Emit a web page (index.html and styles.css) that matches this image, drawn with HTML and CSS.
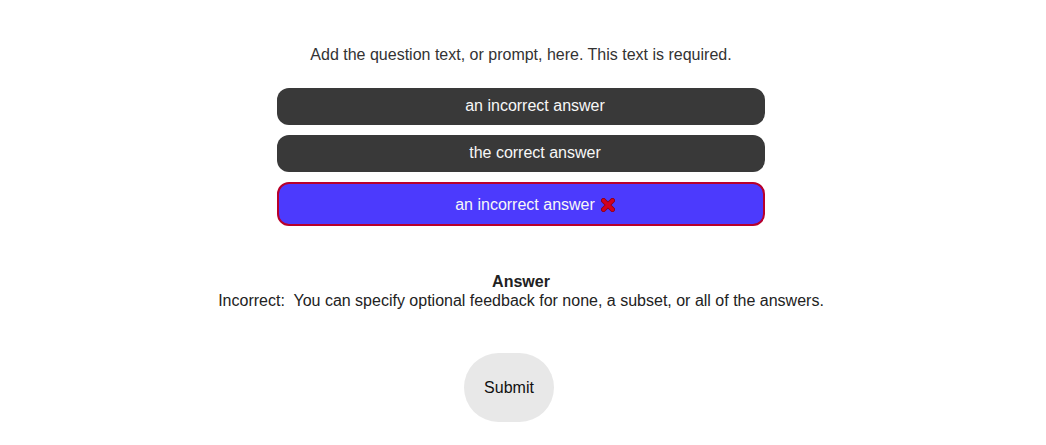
FILE: index.html
```html
<!DOCTYPE html>
<html>
<head>
<meta charset="utf-8">
<link rel="stylesheet" href="styles.css">
</head>
<body>
<div class="quiz">
  <p class="prompt">Add the question text, or prompt, here. This text is required.</p>
  <div class="answers">
    <div class="answer">an incorrect answer</div>
    <div class="answer">the correct answer</div>
    <div class="answer selected">an incorrect answer <svg class="mark" width="14" height="14" viewBox="0 0 14 14" aria-hidden="true"><path d="M2.5 2.5 L11.5 11.5 M11.5 2.5 L2.5 11.5" stroke="#8a0018" stroke-width="5" stroke-linecap="round"/><path d="M2.5 2.5 L11.5 11.5 M11.5 2.5 L2.5 11.5" stroke="#d3001f" stroke-width="3.4" stroke-linecap="round"/></svg></div>
  </div>
  <div class="feedback">
    <div class="feedback-title">Answer</div>
    <div class="feedback-text">Incorrect:&nbsp; You can specify optional feedback for none, a subset, or all of the answers.</div>
  </div>
  <button class="submit">Submit</button>
</div>
</body>
</html>
```
FILE: styles.css
```css
html, body {
  margin: 0;
  padding: 0;
  background: #fff;
}
body {
  font-family: "Liberation Sans", Arial, sans-serif;
  font-size: 16px;
  color: #333;
}
.quiz {
  display: flex;
  flex-direction: column;
  align-items: center;
  padding-top: 46px;
  padding-right: 4px;
}
.prompt {
  margin: 0;
  line-height: 18px;
  color: #333;
}
.answers {
  margin-top: 24px;
  width: 488px;
  display: flex;
  flex-direction: column;
  gap: 10px;
}
.answer {
  box-sizing: border-box;
  height: 37px;
  border-radius: 12px;
  background: #393939;
  color: #f7f7f7;
  display: flex;
  align-items: center;
  justify-content: center;
  line-height: 18px;
  padding-left: 28px;
  padding-bottom: 2px;
}
.answer.selected {
  height: 44px;
  background: #4c3afd;
  border: 2px solid #b8002c;
  padding-left: 28px;
  padding-bottom: 0;
  padding-top: 1px;
}
.mark {
  margin-left: 6px;
  margin-top: 1px;
}
.feedback {
  margin-top: 46px;
  text-align: center;
  line-height: 19px;
  color: #222;
}
.feedback-title {
  font-weight: bold;
}
.submit {
  margin-top: 43px;
  margin-right: 24px;
  width: 90px;
  height: 69px;
  border: none;
  border-radius: 35px;
  background: #e8e8e8;
  color: #111;
  font-family: "Liberation Sans", Arial, sans-serif;
  font-size: 16px;
  padding: 0;
}
```
